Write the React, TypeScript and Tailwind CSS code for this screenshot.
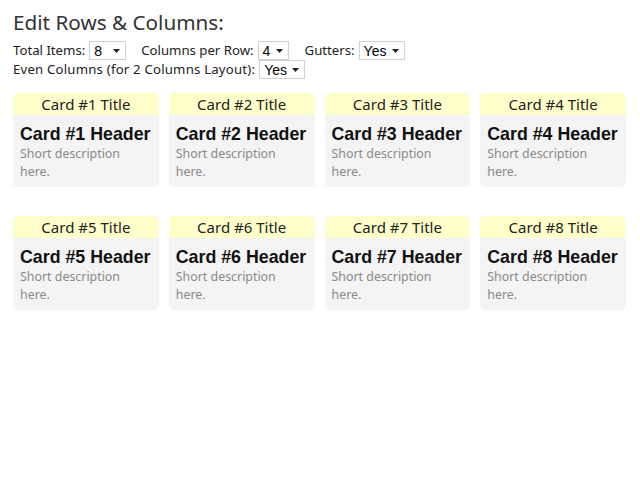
import React from "react";

function Select({ value, width }: { value: string; width: string }) {
  return (
    <span className={`relative inline-flex items-center h-[19px] border border-[#d0d0d0] bg-white ${width} pl-[4px] text-[14px] leading-none text-black align-middle`} style={{ fontFamily: '"Liberation Sans", Arial, sans-serif' }}>
      {value}
      <svg className="absolute right-[5px] top-[7px]" width="7" height="4" viewBox="0 0 7 4">
        <path d="M0 0h7L3.5 4z" fill="#222" />
      </svg>
    </span>
  );
}

function Card({ n }: { n: number }) {
  return (
    <div className="rounded-[5px] overflow-hidden bg-[#f4f4f4]">
      <div className="bg-[#ffffcc] h-[22px] flex items-center justify-center text-[15px] text-[#222]">Card #{n} Title</div>
      <div className="px-[7px] pt-[8px] pb-[6px]">
        <div className="text-[17.8px] font-bold leading-[22px] text-[#111] whitespace-nowrap" style={{ fontFamily: '"Liberation Sans", Arial, sans-serif' }}>Card #{n} Header</div>
        <div className="text-[12.4px] leading-[18px] text-[#8a8a8a]">Short description<br />here.</div>
      </div>
    </div>
  );
}

export default function App() {
  return (
    <div className="bg-white min-h-[500px] px-[13px] pt-[8px] text-[#222]" style={{ fontFamily: '"Noto Sans", "Open Sans", sans-serif' }}>
      <h1 className="text-[20.7px] leading-[28px] font-normal text-[#333] mb-[5px]">Edit Rows &amp; Columns:</h1>
      <div className="text-[13.2px] leading-[19px]">
        <div className="flex items-center h-[19px]">
          <span>Total Items:</span>
          <span className="ml-[4px]"><Select value="8" width="w-[37px]" /></span>
          <span className="ml-[15px]">Columns per Row:</span>
          <span className="ml-[4px]"><Select value="4" width="w-[31px]" /></span>
          <span className="ml-[16px]">Gutters:</span>
          <span className="ml-[4px]"><Select value="Yes" width="w-[46px]" /></span>
        </div>
        <div className="flex items-center h-[19px]">
          <span className="tracking-[0.2px]">Even Columns (for 2 Columns Layout):</span>
          <span className="ml-[4px]"><Select value="Yes" width="w-[46px]" /></span>
        </div>
      </div>
      <div className="mt-[14px] flex flex-col gap-[29px] w-[613px]">
        <div className="grid grid-cols-4 gap-[10px]">
          {[1, 2, 3, 4].map((n) => <Card key={n} n={n} />)}
        </div>
        <div className="grid grid-cols-4 gap-[10px]">
          {[5, 6, 7, 8].map((n) => <Card key={n} n={n} />)}
        </div>
      </div>
    </div>
  );
}
